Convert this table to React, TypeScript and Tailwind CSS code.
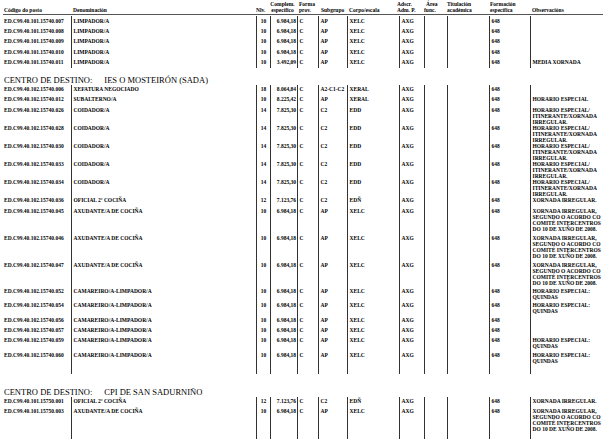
import React from "react";

type Row = {
  code: string;
  den: string;
  niv: string;
  comp: string;
  sub: string;
  corpo: string;
  obs: string[];
  h: string;
};

const G1: Row[] = [
  { code: "ED.C99.40.101.15740.007", den: "LIMPADOR/A", niv: "10", comp: "6.984,18", sub: "AP", corpo: "XELC", obs: [], h: "h-[10px]" },
  { code: "ED.C99.40.101.15740.008", den: "LIMPADOR/A", niv: "10", comp: "6.984,18", sub: "AP", corpo: "XELC", obs: [], h: "h-[10px]" },
  { code: "ED.C99.40.101.15740.009", den: "LIMPADOR/A", niv: "10", comp: "6.984,18", sub: "AP", corpo: "XELC", obs: [], h: "h-[11px]" },
  { code: "ED.C99.40.101.15740.010", den: "LIMPADOR/A", niv: "10", comp: "6.984,18", sub: "AP", corpo: "XELC", obs: [], h: "h-[10px]" },
  { code: "ED.C99.40.101.15740.011", den: "LIMPADOR/A", niv: "10", comp: "3.492,09", sub: "AP", corpo: "XELC", obs: ["MEDIA XORNADA"], h: "h-[11px]" },
];

const HE = ["HORARIO ESPECIAL/", "ITINERANTE/XORNADA", "IRREGULAR."];
const XI = ["XORNADA IRREGULAR,", "SEGUNDO O ACORDO CO", "COMITÉ INTERCENTROS", "DO 10 DE XUÑO DE 2008."];
const HQ = ["HORARIO ESPECIAL:", "QUINDAS"];

const G2: Row[] = [
  { code: "ED.C99.40.102.15740.006", den: "XEFATURA NEGOCIADO", niv: "18", comp: "8.064,84", sub: "A2-C1-C2", corpo: "XERAL", obs: [], h: "h-[10px]" },
  { code: "ED.C99.40.102.15740.012", den: "SUBALTERNO/A", niv: "10", comp: "8.225,42", sub: "AP", corpo: "XERAL", obs: ["HORARIO ESPECIAL"], h: "h-[11px]" },
  { code: "ED.C99.40.102.15740.026", den: "COIDADOR/A", niv: "14", comp: "7.825,30", sub: "C2", corpo: "EDD", obs: HE, h: "h-[18px]" },
  { code: "ED.C99.40.102.15740.028", den: "COIDADOR/A", niv: "14", comp: "7.825,30", sub: "C2", corpo: "EDD", obs: HE, h: "h-[18px]" },
  { code: "ED.C99.40.102.15740.030", den: "COIDADOR/A", niv: "14", comp: "7.825,30", sub: "C2", corpo: "EDD", obs: HE, h: "h-[18px]" },
  { code: "ED.C99.40.102.15740.033", den: "COIDADOR/A", niv: "14", comp: "7.825,30", sub: "C2", corpo: "EDD", obs: HE, h: "h-[18px]" },
  { code: "ED.C99.40.102.15740.034", den: "COIDADOR/A", niv: "14", comp: "7.825,30", sub: "C2", corpo: "EDD", obs: HE, h: "h-[18px]" },
  { code: "ED.C99.40.102.15740.036", den: "OFICIAL 2ª COCIÑA", niv: "12", comp: "7.123,76", sub: "C2", corpo: "EDÑ", obs: ["XORNADA IRREGULAR."], h: "h-[11px]" },
  { code: "ED.C99.40.102.15740.045", den: "AXUDANTE/A DE COCIÑA", niv: "10", comp: "6.984,18", sub: "AP", corpo: "XELC", obs: XI, h: "h-[27px]" },
  { code: "ED.C99.40.102.15740.046", den: "AXUDANTE/A DE COCIÑA", niv: "10", comp: "6.984,18", sub: "AP", corpo: "XELC", obs: XI, h: "h-[27px]" },
  { code: "ED.C99.40.102.15740.047", den: "AXUDANTE/A DE COCIÑA", niv: "10", comp: "6.984,18", sub: "AP", corpo: "XELC", obs: XI, h: "h-[26px]" },
  { code: "ED.C99.40.102.15740.052", den: "CAMAREIRO/A-LIMPADOR/A", niv: "10", comp: "6.984,18", sub: "AP", corpo: "XELC", obs: HQ, h: "h-[14px]" },
  { code: "ED.C99.40.102.15740.054", den: "CAMAREIRO/A-LIMPADOR/A", niv: "10", comp: "6.984,18", sub: "AP", corpo: "XELC", obs: HQ, h: "h-[15px]" },
  { code: "ED.C99.40.102.15740.056", den: "CAMAREIRO/A-LIMPADOR/A", niv: "10", comp: "6.984,18", sub: "AP", corpo: "XELC", obs: [], h: "h-[10px]" },
  { code: "ED.C99.40.102.15740.057", den: "CAMAREIRO/A-LIMPADOR/A", niv: "10", comp: "6.984,18", sub: "AP", corpo: "XELC", obs: [], h: "h-[10px]" },
  { code: "ED.C99.40.102.15740.059", den: "CAMAREIRO/A-LIMPADOR/A", niv: "10", comp: "6.984,18", sub: "AP", corpo: "XELC", obs: HQ, h: "h-[15px]" },
  { code: "ED.C99.40.102.15740.060", den: "CAMAREIRO/A-LIMPADOR/A", niv: "10", comp: "6.984,18", sub: "AP", corpo: "XELC", obs: HQ, h: "h-[23px]" },
];

const G3: Row[] = [
  { code: "ED.C99.40.101.15750.001", den: "OFICIAL 2ª COCIÑA", niv: "12", comp: "7.123,76", sub: "C2", corpo: "EDÑ", obs: ["XORNADA IRREGULAR."], h: "h-[10px]" },
  { code: "ED.C99.40.101.15750.003", den: "AXUDANTE/A DE COCIÑA", niv: "10", comp: "6.984,18", sub: "AP", corpo: "XELC", obs: XI, h: "h-[33px]" },
];

const cols =
  "grid grid-cols-[71px_185px_14px_27px_21px_29px_52px_25px_23px_42px_41px_85px]";
const cell = "border-l border-[#333] pt-[1.5px] overflow-hidden whitespace-nowrap";

function DataRow({ r }: { r: Row }) {
  return (
    <div className={`${cols} ${r.h} text-[5.5px] leading-[6px] font-bold`}>
      <div className="pl-[4px] pt-[1.5px] whitespace-nowrap">{r.code}</div>
      <div className={`${cell} pl-[1.5px]`}>{r.den}</div>
      <div className={`${cell} text-center`}>{r.niv}</div>
      <div className={`${cell} text-right pr-[1px]`}>{r.comp}</div>
      <div className={`${cell} pl-[1.5px]`}>C</div>
      <div className={`${cell} pl-[1.5px]`}>{r.sub}</div>
      <div className={`${cell} pl-[1.5px]`}>{r.corpo}</div>
      <div className={`${cell} pl-[1.5px]`}>AXG</div>
      <div className={cell}></div>
      <div className={cell}></div>
      <div className={`${cell} pl-[1.5px]`}>648</div>
      <div className={`${cell} pl-[1.5px]`}>
        {r.obs.map((l, i) => (
          <div key={i}>{l}</div>
        ))}
      </div>
    </div>
  );
}

function Heading({ name, h }: { name: string; h: string }) {
  return (
    <div className={`flex items-end ${h} pl-[4px] text-[8.5px] leading-[9px] text-black`}>
      <span>CENTRO DE DESTINO:</span>
      <span className="ml-[12px]">{name}</span>
    </div>
  );
}

function Header() {
  return (
    <div className="ml-[3px] w-[600px] h-[15px] border-b border-[#555] grid grid-cols-[70px_183px_11px_31px_23px_28px_48px_27px_23px_43px_42px_71px] items-end text-[5.5px] leading-[6px] font-bold whitespace-nowrap pb-[1px]">
      <div className="pl-[1px]">Código do posto</div>
      <div>Denominación</div>
      <div>Nlv.</div>
      <div className="text-center">
        <div>Complem.</div>
        <div>específico</div>
      </div>
      <div className="pl-[1px]">
        <div>Forma</div>
        <div>prov.</div>
      </div>
      <div>Subgrupo</div>
      <div>Corpo/escala</div>
      <div>
        <div>Adscr.</div>
        <div>Adm. P.</div>
      </div>
      <div>
        <div className="pl-[2px]">Área</div>
        <div>func.</div>
      </div>
      <div>
        <div>Titulación</div>
        <div>académica</div>
      </div>
      <div>
        <div>Formación</div>
        <div>específica</div>
      </div>
      <div>Observacións</div>
    </div>
  );
}

export default function App() {
  return (
    <div className="w-[615px] h-[439px] overflow-hidden bg-white text-black antialiased font-['Liberation_Serif',serif]">
      <Header />
      <div className="mt-[1px]">
        {G1.map((r) => (
          <DataRow key={r.code} r={r} />
        ))}
      </div>
      <Heading name="IES O MOSTEIRÓN (SADA)" h="h-[16.5px]" />
      <div>
        {G2.map((r) => (
          <DataRow key={r.code} r={r} />
        ))}
      </div>
      <Heading name="CPI DE SAN SADURNIÑO" h="h-[23px]" />
      <div>
        {G3.map((r) => (
          <DataRow key={r.code} r={r} />
        ))}
      </div>
    </div>
  );
}
